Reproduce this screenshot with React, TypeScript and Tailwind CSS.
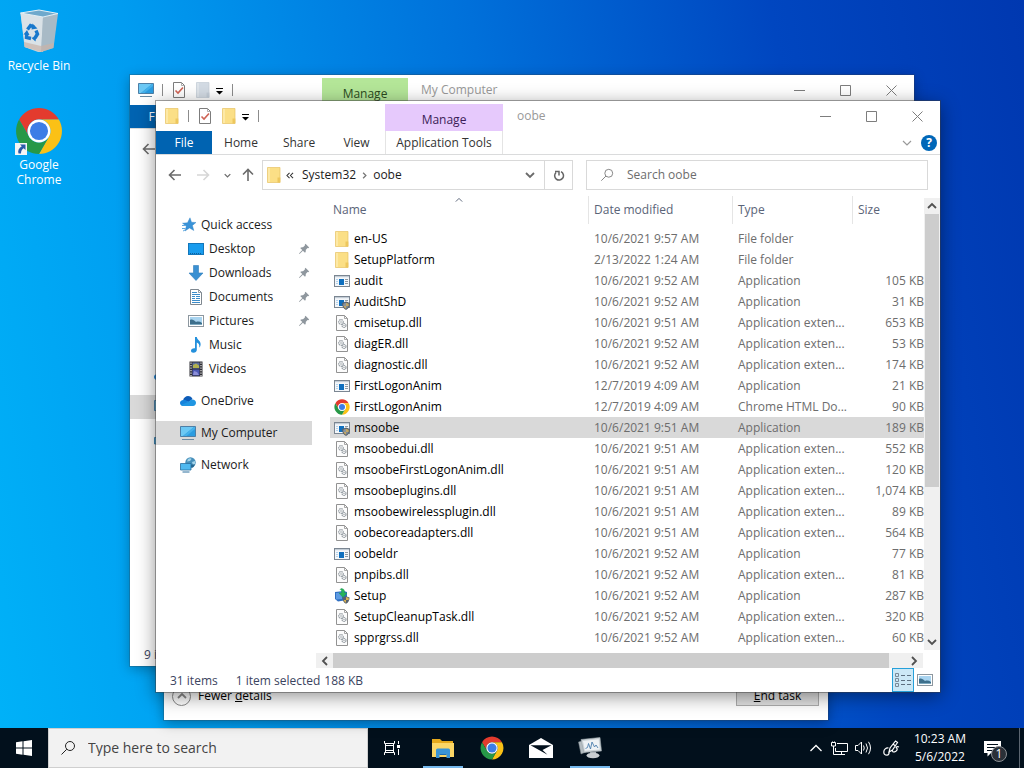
import type { ReactNode } from 'react';
import clsx from 'clsx';

interface FileRow {
  name: string;
  date: string;
  type: string;
  size: string;
  icon: 'folder' | 'app' | 'shield' | 'dll' | 'chrome' | 'setup';
  selected?: boolean;
}

const FILES: FileRow[] = [
  { name: 'en-US', date: '10/6/2021 9:57 AM', type: 'File folder', size: '', icon: 'folder' },
  { name: 'SetupPlatform', date: '2/13/2022 1:24 AM', type: 'File folder', size: '', icon: 'folder' },
  { name: 'audit', date: '10/6/2021 9:52 AM', type: 'Application', size: '105 KB', icon: 'app' },
  { name: 'AuditShD', date: '10/6/2021 9:52 AM', type: 'Application', size: '31 KB', icon: 'shield' },
  { name: 'cmisetup.dll', date: '10/6/2021 9:51 AM', type: 'Application exten...', size: '653 KB', icon: 'dll' },
  { name: 'diagER.dll', date: '10/6/2021 9:52 AM', type: 'Application exten...', size: '53 KB', icon: 'dll' },
  { name: 'diagnostic.dll', date: '10/6/2021 9:52 AM', type: 'Application exten...', size: '174 KB', icon: 'dll' },
  { name: 'FirstLogonAnim', date: '12/7/2019 4:09 AM', type: 'Application', size: '21 KB', icon: 'app' },
  { name: 'FirstLogonAnim', date: '12/7/2019 4:09 AM', type: 'Chrome HTML Do...', size: '90 KB', icon: 'chrome' },
  { name: 'msoobe', date: '10/6/2021 9:51 AM', type: 'Application', size: '189 KB', icon: 'shield', selected: true },
  { name: 'msoobedui.dll', date: '10/6/2021 9:51 AM', type: 'Application exten...', size: '552 KB', icon: 'dll' },
  { name: 'msoobeFirstLogonAnim.dll', date: '10/6/2021 9:51 AM', type: 'Application exten...', size: '120 KB', icon: 'dll' },
  { name: 'msoobeplugins.dll', date: '10/6/2021 9:51 AM', type: 'Application exten...', size: '1,074 KB', icon: 'dll' },
  { name: 'msoobewirelessplugin.dll', date: '10/6/2021 9:51 AM', type: 'Application exten...', size: '89 KB', icon: 'dll' },
  { name: 'oobecoreadapters.dll', date: '10/6/2021 9:51 AM', type: 'Application exten...', size: '564 KB', icon: 'dll' },
  { name: 'oobeldr', date: '10/6/2021 9:52 AM', type: 'Application', size: '77 KB', icon: 'app' },
  { name: 'pnpibs.dll', date: '10/6/2021 9:52 AM', type: 'Application exten...', size: '81 KB', icon: 'dll' },
  { name: 'Setup', date: '10/6/2021 9:52 AM', type: 'Application', size: '287 KB', icon: 'setup' },
  { name: 'SetupCleanupTask.dll', date: '10/6/2021 9:52 AM', type: 'Application exten...', size: '320 KB', icon: 'dll' },
  { name: 'spprgrss.dll', date: '10/6/2021 9:52 AM', type: 'Application exten...', size: '60 KB', icon: 'dll' },
];

// --- Icons ---
const ChromeIcon = ({ className }: { className: string }) => (
  <svg viewBox="1 1 46 46" className={className}>
    <path fill="#e33b2e" d="M4.95 13A22 22 0 0 1 43.05 13H24A11 11 0 0 0 14.47 29.5Z" />
    <path fill="#fbc116" d="M43.05 13A22 22 0 0 1 24 46L33.53 29.5A11 11 0 0 0 24 13Z" />
    <path fill="#279847" d="M24 46A22 22 0 0 1 4.95 13L14.47 29.5A11 11 0 0 0 33.53 29.5Z" />
    <circle cx="24" cy="24" r="11" fill="#fff" />
    <circle cx="24" cy="24" r="8.7" fill="#3c7de6" />
  </svg>
);

const FolderIcon = ({ faded }: { faded?: boolean }) => (
  <svg viewBox="0 0 16 16" className="h-4 w-4 shrink-0">
    <path fill={faded ? '#d3dbe4' : '#fbdf86'} stroke={faded ? '#c3ccd6' : '#e6c364'} strokeWidth=".7" d="M1.500.5h12.500v15H1.500z" />
    <path fill={faded ? '#c4ced9' : '#edc75d'} d="M11.500 10.500h2.800v5h-2.800z" />
    <path fill={faded ? '#dfe5eb' : '#fde9a6'} d="M2 1h2v14H2z" />
  </svg>
);

const AppIcon = ({ shield }: { shield?: boolean }) => (
  <svg viewBox="0 0 16 16" className="h-4 w-4 shrink-0">
    <rect x=".5" y="2.500" width="15" height="11" fill="#f4f7fa" stroke="#7b8692" />
    <path fill="#c3cdd6" d="M1 3h14v1.200H1z" />
    <path fill="#0f6fbe" d="M5 6h5v6H5z" />
    <path stroke="#8e99a3" d="M11 6.500h3M11 8.500h3M11 10.500h3" />
    <path stroke="#b5d3ec" d="M2 6.500h2M2 8.500h2M2 10.500h2" />
    {shield && (
      <>
        <path fill="#58626d" d="M8 9l4-1.400L16 9c0 3.500-1.300 5.500-4 7-2.700-1.500-4-3.500-4-7z" />
        <path fill="#8a949d" d="M9.300 9.800l2.700-1V12H9.300z" />
        <path fill="#c2a767" d="M12 8.800l2.700 1V12H12zM9.500 12H12v2.800c-1.400-.7-2.100-1.600-2.500-2.800z" />
        <path fill="#7e8993" d="M12 12h2.500c-.4 1.200-1.100 2.100-2.500 2.800z" />
      </>
    )}
  </svg>
);

const DllIcon = () => (
  <svg viewBox="0 0 16 16" className="h-4 w-4 shrink-0" fill="none">
    <path fill="#fcfcfc" stroke="#929292" d="M2.500.5h8l3 3v12h-11z" />
    <path stroke="#929292" strokeWidth=".8" d="M10.500.5v3h3" />
    <circle cx="7" cy="7" r="2.300" stroke="#9aa1a7" strokeWidth="1.200" strokeDasharray="1.500 .5" />
    <circle cx="7" cy="7" r=".8" fill="#9aa1a7" />
    <circle cx="10" cy="10.500" r="2" stroke="#9aa1a7" strokeWidth="1.200" strokeDasharray="1.500 .5" />
    <circle cx="10" cy="10.500" r=".7" fill="#9aa1a7" />
  </svg>
);

const SetupIcon = () => (
  <svg viewBox="0 0 16 16" className="h-4 w-4 shrink-0">
    <path fill="#2f6fc2" d="M1 4l9-1 3 1v8l-9 1.500L1 11z" />
    <path fill="#5d9be2" d="M2 5l6-.6V11L2 11.500z" />
    <path fill="#27b35a" stroke="#1d8f52" strokeWidth=".4" d="M7 .5c2 0 3.500 1 3.500 3V5H13L9 9.500 5 5h2.500V3C7.500 2 7 1.500 6 1.500z" />
    <path fill="#58626d" d="M8.500 9.500l3.500-1.300 3.500 1.300c0 3-1 5-3.500 6.300-2.500-1.300-3.500-3.300-3.500-6.300z" />
    <path fill="#d9b252" d="M12 9l2.700 1v2H12zM9.600 12H12v2.800c-1.300-.7-2-1.600-2.400-2.800z" />
  </svg>
);

const ComputerIcon = () => (
  <svg viewBox="0 0 16 16" className="h-4 w-4 shrink-0">
    <path fill="#2a9ce0" stroke="#4d7fa6" d="M.5 1.500h15v10H.5z" />
    <path fill="#6cc8f4" d="M1 2h13L3 11H1z" />
    <path fill="#45b0ea" d="M14 2h1v2L6.500 11H3z" />
    <path fill="#6b8ba3" d="M2 14h12v1H2z" />
  </svg>
);

const TaskDocIcon = () => (
  <svg viewBox="0 0 16 16" className="h-4 w-4 shrink-0" fill="none">
    <path fill="#fff" stroke="#7c7c7c" d="M2.500.5h8l3 3v12h-11z" />
    <path stroke="#9a9a9a" strokeWidth=".8" d="M10.500.5v3h3" />
    <path stroke="#cf6355" strokeWidth="1.600" d="M4.500 8.500l2.500 2.500L12 5.500" />
  </svg>
);

const StarIcon = () => (
  <svg viewBox="0 0 16 16" className="h-4 w-4 shrink-0">
    <path fill="#3a93d8" stroke="#2b7fc2" strokeWidth=".4" d="M10 .8l1.500 4.400 4.500.3-3.600 2.900 1.400 5.100L9.500 11 5 14l1.300-4.800L2.500 6.200l5-.5z" />
    <path stroke="#5fa9e0" d="M2 8.500h3M2 11.500h3.500M3 14l2-1" />
  </svg>
);

const DesktopIcon = () => (
  <svg viewBox="0 0 16 16" className="h-4 w-4 shrink-0">
    <rect x=".5" y="2.500" width="15" height="11" fill="#189cee" stroke="#1376ba" />
    <path stroke="#0d5f9b" strokeDasharray="1 1" d="M2 12.500h12" />
  </svg>
);

const DownloadIcon = () => (
  <svg viewBox="0 0 16 16" className="h-4 w-4 shrink-0">
    <path fill="#3a90d2" stroke="#2f7dba" strokeWidth=".6" d="M5.500.5h5V8h4.500L8 15.500 1 8h4.500z" />
  </svg>
);

const DocumentIcon = () => (
  <svg viewBox="0 0 16 16" className="h-4 w-4 shrink-0" fill="none">
    <path fill="#fff" stroke="#7f8890" d="M2.500.5h8l3 3v12h-11z" />
    <path stroke="#7f8890" strokeWidth=".8" d="M10.500.5v3h3" />
    <path stroke="#3c8cc9" d="M4 3.500h5M4 5.500h8M4 7.500h3M8 7.500h4M4 9.500h3M8 9.500h4M4 11.500h8M4 13.500h8" />
  </svg>
);

const PictureIcon = () => (
  <svg viewBox="0 0 16 16" className="h-4 w-4 shrink-0">
    <rect x=".5" y="2.500" width="15" height="11" fill="#fff" stroke="#8d979f" />
    <path fill="#a9d4f0" d="M2 4h12v8H2z" />
    <path fill="#3d6f8c" d="M2 7c2-1 4 0 6 2 2-.8 4-.6 6 1v2H2z" />
    <path fill="#7da9bf" d="M2 11h12v1H2z" />
  </svg>
);

const MusicIcon = () => (
  <svg viewBox="0 0 16 16" className="h-4 w-4 shrink-0">
    <path fill="#2490dc" d="M7 0h1.800c.3 3 4.200 3.500 3.800 8-.2 1.200-.6 2-1.300 2.800.5-3-.6-4.600-2.500-5.300V13c0 1.500-1.500 2.700-3.300 2.700S3 15 3 13.500 4.500 11 7 11.200z" />
  </svg>
);

const VideoIcon = () => (
  <svg viewBox="0 0 16 16" className="h-4 w-4 shrink-0">
    <path fill="#2d2d33" d="M1.500.5h13v15h-13z" />
    <path fill="#5d6f9e" d="M4.500 1.500h7v6h-7z" />
    <path fill="#b2b04e" d="M5 4l3-1.500 3 2v2.500H5z" />
    <path fill="#4b57b5" d="M4.500 8.500h7v6h-7z" />
    <path fill="#8b8ed8" d="M6 10l3 1 2 3H5z" />
    <path stroke="#e8e8e8" strokeWidth="1.200" strokeDasharray="1.200 1.300" d="M3 1.500v14M13 1.500v14" />
  </svg>
);

const OneDriveIcon = () => (
  <svg viewBox="0 0 16 16" className="h-4 w-4 shrink-0">
    <path fill="#0d5cb8" d="M3 7.500C3.500 4.500 6 3 8 3c2 0 3.800 1 4.500 3L9 9z" />
    <path fill="#1683dc" d="M3.300 7c1.700-.3 3 .4 4 1L12 11l-2 2H3.500C1.500 13 0 11.700 0 10s1.400-2.900 3.300-3z" />
    <path fill="#2096e2" d="M12.500 6.500C14.500 6.500 16 8 16 9.800S14.700 13 13 13H3.500c-1 0-1.800-.3-2.400-.9L9 8.500c1-1.200 2-2 3.500-2z" />
  </svg>
);

const NetworkIcon = () => (
  <svg viewBox="0 0 16 16" className="h-4 w-4 shrink-0">
    <circle cx="10.500" cy="5.500" r="5.200" fill="#4790bb" />
    <path fill="#a3d4ea" d="M8 2c1.500-1 3-1 3.500 0L10 4 7 4.500zM12 5l3-1v3l-2 1z" />
    <path fill="#28688f" d="M10.500 7.500H15l-2 3h-2.500z" />
    <path fill="#4fb9f0" stroke="#2a6f9e" strokeWidth=".8" d="M.5 6.500H11v6.500H.5z" />
    <path stroke="#2a6f9e" d="M2.500 15h7" />
  </svg>
);

const PinIcon = () => (
  <svg viewBox="0 0 12 12" className="ml-auto h-3 w-3 shrink-0">
    <path fill="#8f979e" d="M7.500.8L11.200 4.500l-1 .7-.7-.1L7.700 7c.3 1.200 0 2-.7 2.800L4.900 7.700 1.500 11 1 10.500l3.300-3.400L2.200 5c.8-.7 1.600-1 2.800-.7L6.900 2.500l-.1-.7z" />
  </svg>
);

const Chevron = ({ d, thin, className }: { d: string; thin?: boolean; className?: string }) => (
  <svg viewBox="0 0 10 10" fill="none" stroke="currentColor" strokeWidth={thin ? 1.2 : 1.8} className={clsx('shrink-0', className ?? 'h-[10px] w-[10px]')}>
    <path d={d} />
  </svg>
);

const UP = 'M1 7l4-4 4 4';
const DOWN = 'M1 3l4 4 4-4';
const LEFT = 'M7 1L3 5l4 4';
const RIGHT = 'M3 1l4 4-4 4';

const ArrowIcon = ({ className }: { className?: string }) => (
  <svg viewBox="0 0 14 14" fill="none" stroke="currentColor" strokeWidth="1.600" className={clsx('h-[14px] w-[14px]', className)}>
    <path d="M13 7H1.500M6.500 2l-5 5 5 5" />
  </svg>
);

const SearchIcon = ({ className }: { className: string }) => (
  <svg viewBox="0 0 16 16" fill="none" stroke="currentColor" className={className}>
    <circle cx="10" cy="6" r="4.500" />
    <path d="M6.800 9.200L1.500 14.500" />
  </svg>
);

const fileIcons = {
  folder: <FolderIcon />,
  app: <AppIcon />,
  shield: <AppIcon shield />,
  dll: <DllIcon />,
  chrome: <ChromeIcon className="h-4 w-4 shrink-0" />,
  setup: <SetupIcon />,
};

// --- Window parts ---
const Divider = () => <span className="h-3 w-px bg-[#8c8c8c]" />;

const QuickBar = ({ icon, faded }: { icon: ReactNode; faded?: boolean }) => (
  <div className="flex items-center gap-2 pl-2">
    {icon}
    <Divider />
    <TaskDocIcon />
    <div className="flex items-center gap-1">
      <FolderIcon faded={faded} />
      <svg viewBox="0 0 9 9" className="h-[9px] w-[9px]">
        <path d="M1 2h7v1H1zM1 5h7L4.500 8.500z" />
      </svg>
    </div>
    <Divider />
  </div>
);

const WindowButtons = () => (
  <div className="ml-auto flex text-[#7d7d7d]">
    <button aria-label="Minimize" className="flex w-[46px] items-center justify-center">
      <svg viewBox="0 0 11 11" className="h-[11px] w-[11px]" stroke="currentColor"><path d="M0 5.500h11" /></svg>
    </button>
    <button aria-label="Maximize" className="flex w-[46px] items-center justify-center">
      <svg viewBox="0 0 11 11" className="h-[11px] w-[11px]" stroke="currentColor" fill="none"><path d="M.5.5h10v10H.5z" /></svg>
    </button>
    <button aria-label="Close" className="flex w-[46px] items-center justify-center">
      <svg viewBox="0 0 11 11" className="h-[11px] w-[11px]" stroke="currentColor"><path d="M.5.5l10 10M10.500.5l-10 10" /></svg>
    </button>
  </div>
);

interface SideItemProps {
  icon: ReactNode;
  label: string;
  nested?: boolean;
  pinned?: boolean;
  selected?: boolean;
}

const SideItem = ({ icon, label, nested, pinned, selected }: SideItemProps) => (
  <a href="#" className={clsx('flex h-6 items-center gap-[5px] pr-0.5', nested ? 'pl-8' : 'pl-6', selected && 'bg-[#d9d9d9]')}>
    {icon}
    {label}
    {pinned && <PinIcon />}
  </a>
);

const Sidebar = () => (
  <nav className="flex w-40 shrink-0 flex-col gap-2 pt-[18px] pr-1 text-[#1b1b1b]">
    <div>
      <SideItem icon={<StarIcon />} label="Quick access" />
      <SideItem icon={<DesktopIcon />} label="Desktop" nested pinned />
      <SideItem icon={<DownloadIcon />} label="Downloads" nested pinned />
      <SideItem icon={<DocumentIcon />} label="Documents" nested pinned />
      <SideItem icon={<PictureIcon />} label="Pictures" nested pinned />
      <SideItem icon={<MusicIcon />} label="Music" nested />
      <SideItem icon={<VideoIcon />} label="Videos" nested />
    </div>
    <SideItem icon={<OneDriveIcon />} label="OneDrive" />
    <SideItem icon={<ComputerIcon />} label="My Computer" selected />
    <SideItem icon={<NetworkIcon />} label="Network" />
  </nav>
);

const FileTable = () => (
  <table className="w-full table-fixed border-collapse">
    <colgroup>
      <col />
      <col className="w-36" />
      <col className="w-[120px]" />
      <col className="w-[72px]" />
    </colgroup>
    <thead>
      <tr className="text-left text-[#5a6478]">
        <th className="relative p-0 pb-1 font-normal">
          <div className="flex h-7 items-center pl-[3px]">Name</div>
          <Chevron d={UP} thin className="absolute inset-x-0 top-0 mx-auto h-2 w-2" />
        </th>
        <th className="p-0 pb-1 font-normal"><div className="flex h-7 items-center border-l border-[#e5e5e5] pl-[5px]">Date modified</div></th>
        <th className="p-0 pb-1 font-normal"><div className="flex h-7 items-center border-l border-[#e5e5e5] pl-[5px]">Type</div></th>
        <th className="p-0 pb-1 font-normal"><div className="flex h-7 items-center border-l border-[#e5e5e5] pl-[5px]">Size</div></th>
      </tr>
    </thead>
    <tbody className="text-[#6d6d6d]">
      {FILES.map((file, i) => (
        <tr key={i} className={clsx('h-[21px]', file.selected && 'bg-[#d9d9d9]')}>
          <td className="p-0">
            <div className="flex items-center gap-1 pl-1 text-black">
              {fileIcons[file.icon]}
              {file.name}
            </div>
          </td>
          <td className="p-0 pl-1.5 whitespace-nowrap">{file.date}</td>
          <td className="p-0 pl-1.5 whitespace-nowrap">{file.type}</td>
          <td className="p-0 text-right whitespace-nowrap">{file.size}</td>
        </tr>
      ))}
    </tbody>
  </table>
);

const OobeWindow = () => (
  <section className="absolute top-[101px] right-[84px] left-[156px] flex flex-col bg-white shadow-[0_0_0_1px_rgba(60,60,60,0.45),0_4px_18px_rgba(0,0,0,0.45)]">
    <header className="flex h-[30px]">
      <div className="flex w-[229px] shrink-0"><QuickBar icon={<FolderIcon />} /></div>
      <div className="mt-[3px] flex w-[118px] items-center justify-center bg-[#e6c9fc] pt-1 text-[#3b1d58]">Manage</div>
      <div className="flex items-center pl-[14px] text-[#999]">oobe</div>
      <WindowButtons />
    </header>

    <div className="flex h-6 border-b border-[#dadbdc] text-[#333]">
      <button className="w-14 bg-[#0063b1] text-white">File</button>
      <button className="w-[58px]">Home</button>
      <button className="w-[58px]">Share</button>
      <button className="w-[57px]">View</button>
      <button className="w-[118px] border-x border-[#e4e4e4] whitespace-nowrap">Application Tools</button>
      <div className="ml-auto flex items-center gap-[9px] pr-[3px]">
        <Chevron d={DOWN} thin className="h-[10px] w-[10px] text-[#999]" />
        <button aria-label="Help" className="h-4 w-4 rounded-full bg-[#0067b8] leading-4 font-bold text-white">?</button>
      </div>
    </div>

    <div className="flex h-10 items-center pr-3 pl-[7px] text-[#1b1b1b]">
      <div className="flex items-center gap-1 pr-[5px] text-[#6b6b6b]">
        <button aria-label="Back" className="flex w-6 justify-center"><ArrowIcon /></button>
        <button aria-label="Forward" className="flex w-6 justify-center text-[#d6d6d6]"><ArrowIcon className="rotate-180" /></button>
        <button aria-label="Recent locations" className="flex w-4 justify-center"><Chevron d={DOWN} className="h-[7px] w-[7px]" /></button>
        <button aria-label="Up" className="flex w-[18px] justify-center"><ArrowIcon className="rotate-90" /></button>
      </div>
      <div className="flex h-[30px] flex-1 items-center border border-[#d9d9d9] pl-[3px]">
        <FolderIcon />
        <svg viewBox="0 0 9 8" fill="none" stroke="#333" strokeWidth="1.200" className="ml-1 h-[7px] w-2">
          <path d="M4 1L1 4l3 3M8 1L5 4l3 3" />
        </svg>
        <button className="ml-2">System32</button>
        <Chevron d={RIGHT} className="mx-[5px] h-[7px] w-[7px] text-[#777]" />
        <button>oobe</button>
        <button aria-label="Previous locations" className="mr-[9px] ml-auto text-[#6b6b6b]"><Chevron d={DOWN} /></button>
        <button aria-label="Refresh" className="flex w-7 items-center justify-center self-stretch border-l border-[#d9d9d9]">
          <svg viewBox="0 0 12 12" fill="none" stroke="#666" strokeWidth="1.500" className="h-3 w-3">
            <path d="M3 3.500A4.400 4.400 0 1 0 8 2.700M2 2.500h4v4" />
          </svg>
        </button>
      </div>
      <label className="ml-[13px] flex h-[30px] w-[342px] items-center border border-[#d9d9d9] pl-[13px] text-[#777]">
        <SearchIcon className="h-[14px] w-[14px] shrink-0" />
        <input aria-label="Search oobe" placeholder="Search oobe" className="ml-[13px] w-full min-w-0 outline-none placeholder:text-[#6d6d6d]" />
      </label>
    </div>

    <div className="flex">
      <Sidebar />
      <div className="min-w-0 flex-1">
        <div className="flex pb-[3px]">
          <div className="min-w-0 flex-1 pt-px pb-0.5 pl-[14px]"><FileTable /></div>
          <div className="mt-[3px] flex w-4 flex-col items-center bg-[#f0f0f0] text-[#505050]">
            <button aria-label="Scroll up" className="flex h-4 items-center"><Chevron d={UP} /></button>
            <div className="h-[273px] w-[14px] bg-[#cdcdcd]" />
            <button aria-label="Scroll down" className="mt-auto flex h-4 items-center"><Chevron d={DOWN} /></button>
          </div>
        </div>
        <div className="mr-[17px] flex h-[15px] items-center bg-[#f0f0f0] text-[#505050]">
          <button aria-label="Scroll left" className="flex w-[17px] justify-center"><Chevron d={LEFT} /></button>
          <div className="h-full flex-1 bg-[#cdcdcd]" />
          <button aria-label="Scroll right" className="flex w-[34px] justify-end pr-1"><Chevron d={RIGHT} /></button>
        </div>
      </div>
    </div>

    <footer className="flex h-6 items-center pr-[7px] pl-[14px] text-[#3b4460]">
      <div className="flex items-center pt-0.5">
        <span>31 items</span>
        <span className="ml-[18px]">1 item selected</span>
        <span className="ml-1">188 KB</span>
      </div>
      <button aria-label="Details view" className="ml-auto flex w-[22px] items-center justify-center self-stretch border border-[#26a0da] bg-[#cce8f6]">
        <svg viewBox="0 0 16 14" fill="none" className="h-[14px] w-4">
          <path stroke="#7a8a99" d="M.5.5h3v3h-3zM.5 5.500h3v3h-3zM.5 10.500h3v3h-3z" />
          <path stroke="#5d6f80" strokeDasharray="4 2" d="M6 2.500h10M6 7.500h10M6 11.500h10" />
        </svg>
      </button>
      <button aria-label="Large icons view" className="ml-[3px]"><PictureIcon /></button>
    </footer>
  </section>
);

const ComputerWindow = () => (
  <section className="absolute top-[75px] right-[110px] bottom-[62px] left-[130px] flex flex-col bg-white shadow-[0_0_0_1px_rgba(60,60,60,0.25),0_3px_12px_rgba(0,0,0,0.3)]">
    <header className="flex h-[30px]">
      <div className="flex w-48 shrink-0"><QuickBar icon={<ComputerIcon />} faded /></div>
      <div className="mt-[3px] flex w-[86px] items-center justify-center bg-[#b4e698] pt-1 text-[#2b4a1d]">Manage</div>
      <div className="flex items-center pl-[13px] text-[#999]">My Computer</div>
      <WindowButtons />
    </header>
    <div className="flex h-6 border-b border-[#dadbdc]">
      <button className="w-14 bg-[#0063b1] text-white">File</button>
    </div>
    <div className="flex h-10 items-center pl-[7px] text-[#6b6b6b]">
      <button aria-label="Back" className="flex w-6 justify-center"><ArrowIcon /></button>
    </div>
    <nav className="flex w-40 flex-1 flex-col gap-2 pt-[194px] pr-1">
      <a href="#" aria-label="OneDrive" className="flex h-6 items-center pl-6"><OneDriveIcon /></a>
      <a href="#" aria-label="My Computer" className="flex h-6 items-center bg-[#d9d9d9] pl-6"><ComputerIcon /></a>
      <a href="#" aria-label="Network" className="flex h-6 items-center pl-6"><NetworkIcon /></a>
    </nav>
    <footer className="flex h-6 items-center pt-0.5 pl-[14px] text-[#3b4460]">9 items</footer>
  </section>
);

const TaskManagerWindow = () => (
  <section className="absolute top-[400px] right-[196px] bottom-2 left-[164px] flex items-end justify-between bg-white pr-[9px] pb-[14px] pl-2 shadow-[0_0_0_1px_rgba(60,60,60,0.25),0_3px_12px_rgba(0,0,0,0.35)]">
    <button className="flex h-5 items-center gap-[7px]">
      <span className="flex h-[19px] w-[19px] items-center justify-center rounded-full border border-[#8a8a8a] text-[#8a8a8a]">
        <Chevron d={UP} />
      </span>
      <span>Fewer <u>d</u>etails</span>
    </button>
    <button className="h-[22px] w-[83px] border border-[#adadad] bg-[#e1e1e1] pt-0.5"><u>E</u>nd task</button>
  </section>
);

// --- Desktop shortcuts ---
const RecycleBin = () => (
  <svg viewBox="0 0 48 48" className="h-12 w-12">
    <path fill="#c4d1d9" d="M5.500 5L28 9v35l-5 0L9.500 39z" />
    <path fill="#dae2e7" d="M5.500 5L28 9l-2 35-16-5z" />
    <path fill="#a8bac6" d="M28 9l15-3.500L38.500 40 26 44z" />
    <path fill="#6fa9cc" stroke="#e6f0f5" d="M5.500 5L24 2l19 3.500L28 9z" />
    <path fill="#c9b3a8" opacity=".7" d="M9 34l17 4 13-3-.7 5L26 44 9.500 39z" />
    <g fill="none" stroke="#1878cc" strokeWidth="3.400">
      <path d="M12.500 21.500l3-4 3.500 1.500M21 22.500l1.500 3.500-2.500 4M16 30.500l-4.500-1 .3-4" />
    </g>
    <path fill="#1878cc" d="M17.500 15.500l5 5-6 1zM20.500 33.500l-4-3.500 5-2.500zM8.500 26.500l3.500-4.500 2.500 5z" />
  </svg>
);

const Shortcuts = () => (
  <div className="flex w-[78px] flex-col items-center gap-[34px] pt-2 text-center leading-[15px] text-white [text-shadow:1px_1px_2px_#000,0_0_2px_#000]">
    <button className="flex flex-col items-center gap-0.5 whitespace-nowrap">
      <RecycleBin />
      Recycle Bin
    </button>
    <button className="flex w-16 flex-col items-center gap-0.5">
      <span className="relative">
        <ChromeIcon className="h-12 w-12" />
        <svg viewBox="0 0 12 12" className="absolute bottom-0 left-0 h-3 w-3">
          <path fill="#f5f5f5" d="M0 0h12v12H0z" />
          <path fill="#2a5ba8" d="M5 1.500h5.500V7L8.600 5.200C6.800 6.500 6 8 6 10.500H3.500C2.500 8 3.800 5 6.800 3.300z" />
        </svg>
      </span>
      Google Chrome
    </button>
  </div>
);

// --- Taskbar ---
const TaskButton = ({ label, active, children }: { label: string; active?: boolean; children: ReactNode }) => (
  <button aria-label={label} className="relative flex w-[49px] items-center justify-center">
    {children}
    {active && <span className="absolute bottom-0 h-0.5 w-10 bg-[#76b9ed]" />}
  </button>
);

const Taskbar = () => (
  <footer className="flex h-10 shrink-0 bg-[#02101c] text-white">
    <button aria-label="Start" className="flex w-12 items-center justify-center">
      <svg viewBox="0 0 16 16" fill="#fff" className="h-4 w-4">
        <path d="M0 2.200l6.500-.9v6.200H0zM7.500 1.200L16 0v7.500H7.500zM0 8.500h6.500v6.200L0 13.800zM7.500 8.500H16V16l-8.500-1.200z" />
      </svg>
    </button>
    <label className="flex w-80 items-center gap-3 border border-[#cfcfcf] bg-[#f2f2f2] pl-[11px] text-[#222]">
      <SearchIcon className="h-4 w-4 shrink-0" />
      <input aria-label="Type here to search" placeholder="Type here to search" className="w-full min-w-0 text-[14px] outline-none placeholder:text-[#444]" />
    </label>
    <button aria-label="Task view" className="mr-0.5 flex w-12 items-center justify-center">
      <svg viewBox="0 0 16 16" fill="none" stroke="#fff" className="h-4 w-4">
        <path d="M.5 1v2.500h10V1M.5 15v-2.500h10V15M1.500 5.500h8v5h-8zM1.500 3.500v9M9.500 3.500v9M14.500 1v3M14.500 9v6" />
        <path fill="#fff" stroke="none" d="M13 5h3v3h-3z" />
      </svg>
    </button>
    <TaskButton label="File Explorer" active>
      <svg viewBox="0 0 22 20" className="h-5 w-[22px]">
        <path fill="#e5a91c" d="M0 1h8l2 2h11v5H0z" />
        <path fill="#fbd666" d="M0 5h22v14H0z" />
        <path fill="#3a94d6" d="M4 12q0-1.500 1.500-1.500h11Q18 10.500 18 12v8h-3.500v-4h-7v4H4z" />
        <path fill="#1d6fb5" d="M7.500 16h7v1h-7z" />
      </svg>
    </TaskButton>
    <TaskButton label="Google Chrome"><ChromeIcon className="h-6 w-6" /></TaskButton>
    <TaskButton label="Mail">
      <svg viewBox="0 0 24 20" className="h-5 w-6">
        <path fill="#fff" d="M0 7l12-7 12 7v13H0z" />
        <path fill="#02101c" d="M1.500 7.300h21L13.500 12l5 4.800z" />
      </svg>
    </TaskButton>
    <TaskButton label="Task Manager" active>
      <svg viewBox="0 0 24 22" className="h-[22px] w-6">
        <path fill="#b3bbc0" stroke="#7f898f" strokeWidth=".5" d="M.5 5l5-1.500L8 15l-5 2z" />
        <path fill="#cdd4d8" stroke="#98a2a8" strokeWidth=".6" d="M3 2.500l19-2L23.500 14 6 15.500z" />
        <path fill="#eef2f5" d="M5 4l15.700-1.700 1 10.200L7 13.800z" />
        <path fill="none" stroke="#4c7fae" strokeWidth=".9" d="M7.500 11.500l2-1 1-4 2 5.500 1.500-7 2.500 5 1.500-2 2 3" />
        <path fill="#a9b1b7" d="M12 15l6-.3.5 3h-6z" />
        <ellipse cx="15" cy="18.500" rx="6.500" ry="2.800" fill="#c9ced2" />
      </svg>
    </TaskButton>

    <div className="ml-auto flex items-center">
      <button aria-label="Show hidden icons" className="mr-2"><svg viewBox="0 0 14 14" fill="none" stroke="#fff" strokeWidth="1.300" className="h-[14px] w-[14px]"><path d="M1.500 10L7 4.500l5.500 5.500" /></svg></button>
      <button aria-label="Network" className="mr-[7px]">
        <svg viewBox="0 0 17 15" fill="none" stroke="#fff" className="h-[15px] w-[17px]">
          <path d="M6 2.500h10.500v8H4.500V7M10.500 10.500v3M7 13.500h7M.5 1.500h4v3.500h-4zM2.500 5v8.500H7M1.500.5v1M3.500.5v1" />
        </svg>
      </button>
      <button aria-label="Volume" className="mr-[11px]">
        <svg viewBox="0 0 17 14" fill="none" stroke="#fff" className="h-[14px] w-[17px]">
          <path d="M.5 4.500H3L6.500 1v12L3 9.500H.5zM8.500 4.500q1.500 2.500 0 5M11 2.500q3 4.500 0 9M13.500.8q4 6.200 0 12.400" />
        </svg>
      </button>
      <button aria-label="Windows Ink Workspace" className="mr-[14px]">
        <svg viewBox="0 0 17 16" fill="none" stroke="#fff" strokeWidth="1.200" className="h-4 w-[17px]">
          <path d="M6 12l1-4 5.500-7 2 1.500L9.500 10zM10 4l2.500 2M5.500 8C3 7.500.8 9.500.8 12s1.700 3.200 3.200 3.200S6.500 13.500 6 12M9.500 10c-.5 2 1 2.500 3 1.500s2-3 1-3.500 0-2 2.500-1" />
        </svg>
      </button>
      <div className="text-center leading-[18px]">
        <div>10:23 AM</div>
        <div>5/6/2022</div>
      </div>
      <button aria-label="Notifications" className="relative ml-[18px] h-5 w-6">
        <svg viewBox="0 0 17 17" className="h-[17px] w-[17px]">
          <path fill="#fff" d="M0 1h17v12H7l-3.500 3.500V13H0z" />
          <path stroke="#02101c" d="M3 4.500h11M3 7.500h11M3 10.500h7" />
        </svg>
        <span className="absolute top-2 left-[7px] flex h-4 w-4 items-center justify-center rounded-full border border-[#8b8f94] bg-[#2a3038]">1</span>
      </button>
      <span className="mr-1 ml-[11px] h-10 w-px bg-[#5b6570]" />
    </div>
  </footer>
);

const App = () => {
  return (
    <div className="flex min-h-screen flex-col overflow-hidden bg-[linear-gradient(80deg,#00b2f8_0%,#009cf0_22%,#0070da_52%,#0046c0_78%,#0038b0_100%)] font-['Open_Sans','Noto_Sans',sans-serif] text-[12px] leading-4">
      <main className="relative min-h-[728px] flex-1">
        <Shortcuts />
        <TaskManagerWindow />
        <ComputerWindow />
        <OobeWindow />
      </main>
      <Taskbar />
    </div>
  );
};

export default App;
